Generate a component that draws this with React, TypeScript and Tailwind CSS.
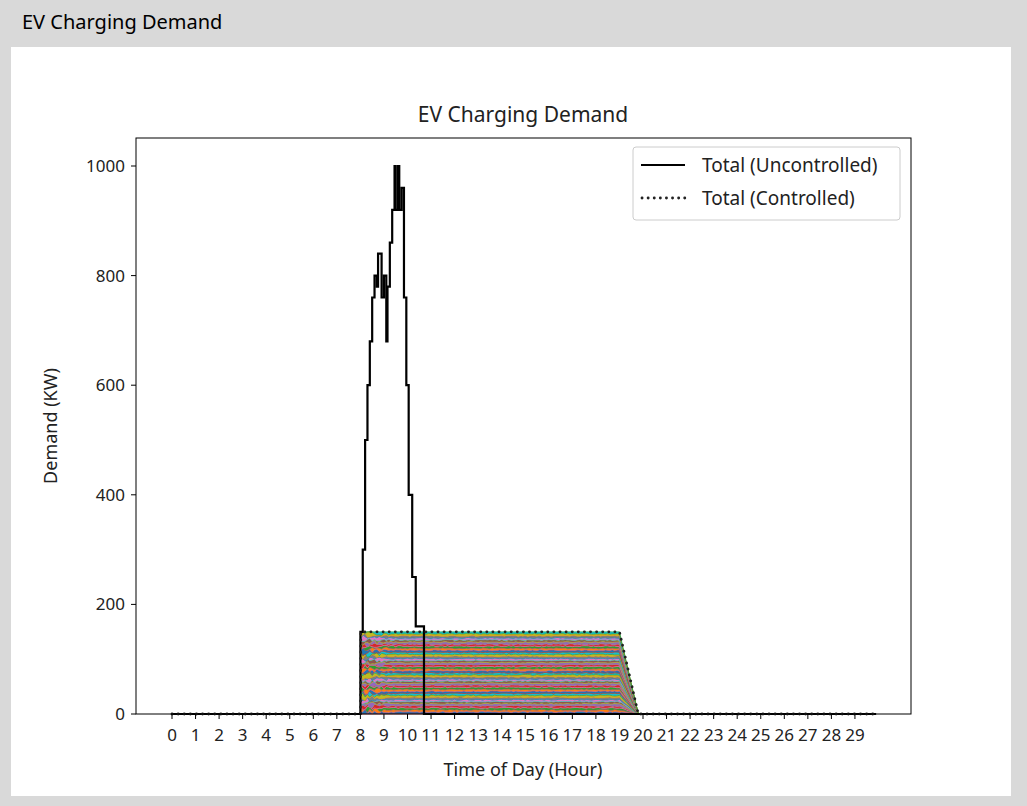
import React from "react";

const C = ["#1f77b4","#ff7f0e","#2ca02c","#d62728","#9467bd","#8c564b","#e377c2","#7f7f7f","#bcbd22","#17becf"];
const X = (h: number) => 172 + 23.55 * h;
const Y = (v: number) => 714 - 0.548 * v;

function rnd(seed: number) {
  const s = Math.sin(seed * 12.9898) * 43758.5453;
  return s - Math.floor(s);
}

function total(t: number) {
  if (t < 8) return 0;
  if (t <= 19) return 150;
  if (t >= 19.8) return 0;
  return 150 * (19.8 - t) / 0.8;
}

const N = 40;
const ts: number[] = [];
for (let t = 8; t <= 19.8001; t += 0.1) ts.push(+t.toFixed(2));

function cum(k: number, i: number) {
  const t = ts[i];
  if (k === 0) return 0;
  if (k === N) return total(t);
  let f = k / N;
  const early = Math.max(0, 1 - (t - 8) / 1.5);
  f += early * (rnd(k * 7.1 + i * 0.3) - 0.5) * 0.08 + (rnd(k * 3.3 + i * 1.7) - 0.5) * 0.012;
  f = Math.min(1, Math.max(0, f));
  return f * total(t);
}

const bands = Array.from({ length: N }, (_, k) => {
  const top = ts.map((t, i) => `${X(t).toFixed(1)},${Y(cum(k + 1, i)).toFixed(1)}`);
  const bot = ts.map((t, i) => `${X(t).toFixed(1)},${Y(cum(k, i)).toFixed(1)}`).reverse();
  return <polygon key={k} points={[...top, ...bot].join(" ")} fill={C[k % 10]} stroke={C[(k + 3) % 10]} strokeWidth={0.6} />;
});

const raw: [number, number][] = [
  [7.98, 0], [8.0, 150], [8.1, 300], [8.2, 500], [8.3, 600], [8.4, 680], [8.5, 760], [8.6, 800], [8.7, 780], [8.75, 840], [8.85, 840], [8.9, 760], [9.0, 800], [9.1, 680], [9.15, 780], [9.25, 860], [9.35, 920], [9.45, 1000], [9.5, 920], [9.6, 1000], [9.65, 920], [9.75, 960], [9.85, 760], [9.95, 600], [10.05, 400], [10.2, 250], [10.35, 160], [10.6, 160], [10.7, 0],
];
const unc: [number, number][] = [[0, 0]];
raw.forEach(([t, v], i) => {
  if (i > 0) unc.push([t, raw[i - 1][1]]);
  unc.push([t, v]);
});
unc.push([29.9, 0]);
const ctl: [number, number][] = [[0, 0], [8, 0], [8.02, 150], [19, 150], [19.8, 0], [29.9, 0]];
const pts = (a: [number, number][]) => a.map(([t, v]) => `${X(t)},${Y(v)}`).join(" ");

export default function App() {
  return (
    <div className="w-[1027px] h-[806px] bg-[#d9d9d9] flex flex-col font-['Liberation_Sans',Arial,sans-serif]">
      <div className="h-[47px] pl-[22px] pt-[7px] text-[20px] text-black">EV Charging Demand</div>
      <div className="ml-[11px] w-[1000px] h-[749px] bg-white">
        <svg width="1000" height="749" viewBox="11 47 1000 749">
          {bands}
          <polyline points={pts(unc)} fill="none" stroke="#000" strokeWidth={2.2} />
          <polyline points={pts(ctl)} fill="none" stroke="#222" strokeWidth={2.8} strokeDasharray="0.1 6" strokeLinecap="round" />
          <rect x={136} y={138} width={775} height={576} fill="none" stroke="#000" strokeWidth={1} />
          {[0, 200, 400, 600, 800, 1000].map(v => (
            <g key={v}>
              <line x1={131} x2={136} y1={Y(v)} y2={Y(v)} stroke="#000" />
              <text x={125} y={Y(v) + 6} fontSize={17} textAnchor="end" fill="#222">{v}</text>
            </g>
          ))}
          {Array.from({ length: 30 }, (_, i) => (
            <g key={i}>
              <line x1={X(i)} x2={X(i)} y1={714} y2={719} stroke="#000" />
              <text x={X(i)} y={741} fontSize={17} textAnchor="middle" fill="#222">{i}</text>
            </g>
          ))}
          <text x={523} y={122} fontSize={21} textAnchor="middle" fill="#222">EV Charging Demand</text>
          <text x={523} y={776} fontSize={18} textAnchor="middle" fill="#222">Time of Day (Hour)</text>
          <text x={0} y={0} fontSize={18} textAnchor="middle" fill="#222" transform="translate(57 426) rotate(-90)">Demand (KW)</text>
          <rect x={633} y={147} width={267} height={73} rx={3} fill="#fff" fillOpacity={0.85} stroke="#ccc" />
          <line x1={641} x2={685} y1={165} y2={165} stroke="#000" strokeWidth={2.2} />
          <line x1={642} x2={685} y1={198} y2={198} stroke="#222" strokeWidth={2.8} strokeDasharray="0.1 6" strokeLinecap="round" />
          <text x={702} y={172} fontSize={19} fill="#222">Total (Uncontrolled)</text>
          <text x={702} y={205} fontSize={19} fill="#222">Total (Controlled)</text>
        </svg>
      </div>
    </div>
  );
}
